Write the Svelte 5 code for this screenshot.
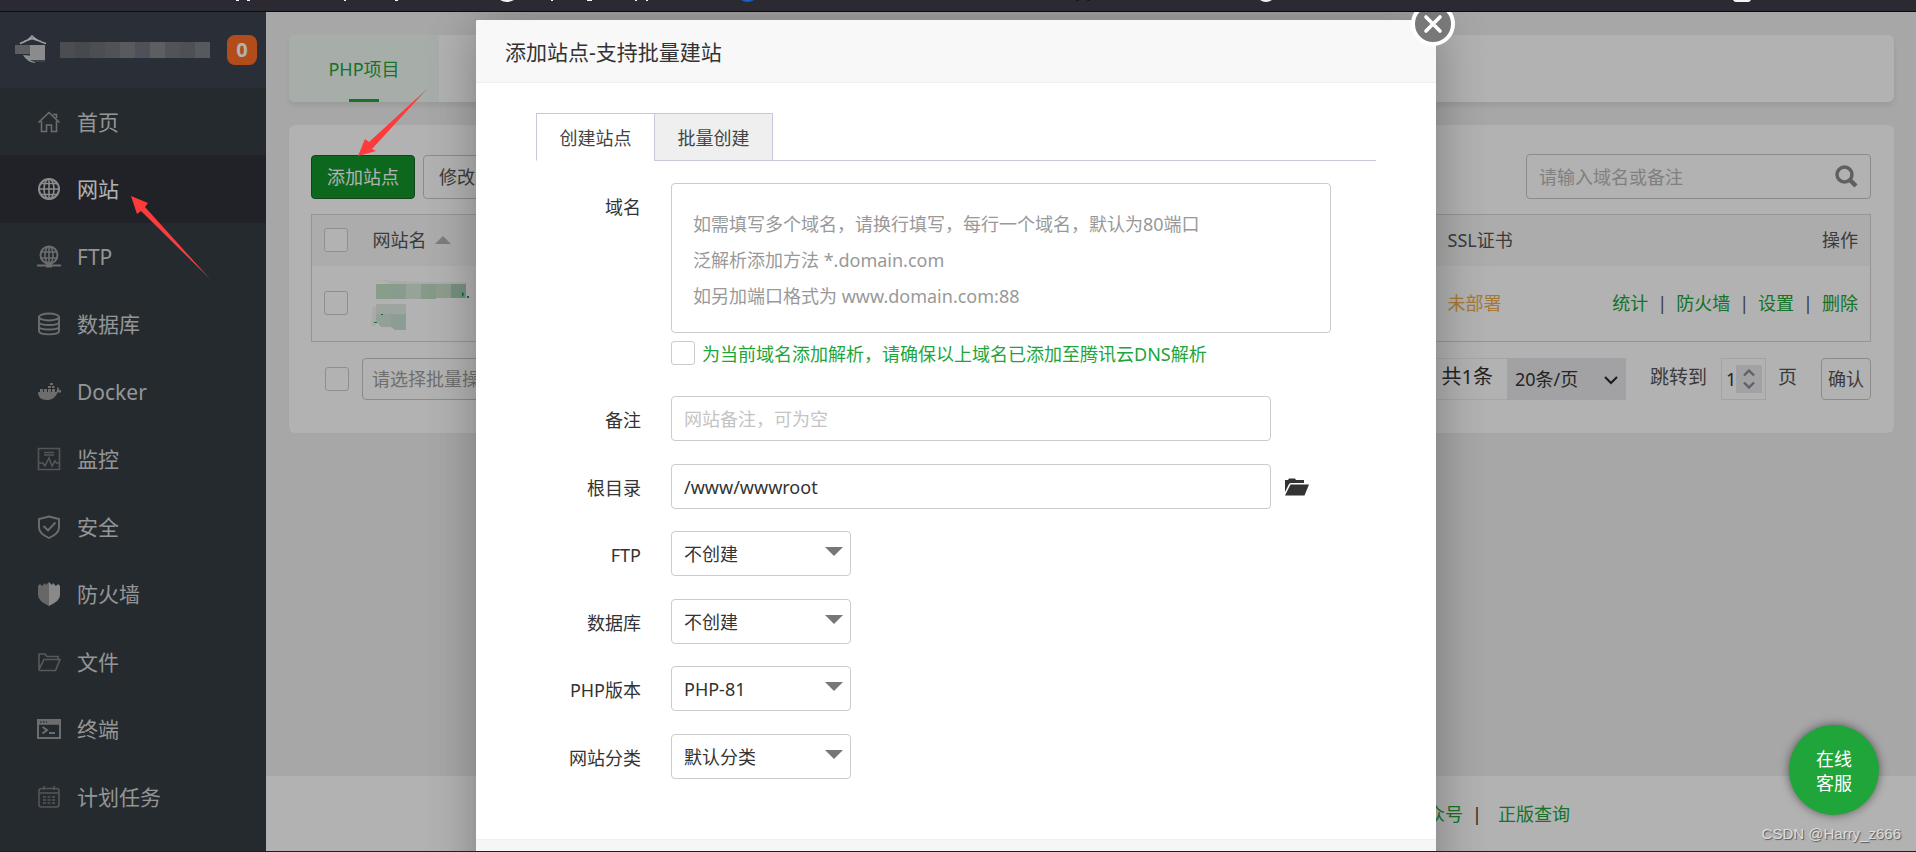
<script>
  const menu = [
    { id: 'home', label: '首页' },
    { id: 'site', label: '网站' },
    { id: 'ftp', label: 'FTP' },
    { id: 'db', label: '数据库' },
    { id: 'docker', label: 'Docker' },
    { id: 'monitor', label: '监控' },
    { id: 'safe', label: '安全' },
    { id: 'wall', label: '防火墙' },
    { id: 'files', label: '文件' },
    { id: 'term', label: '终端' },
    { id: 'cron', label: '计划任务' }
  ];
  const selects = [
    { id: 'f-ftp', label: 'FTP', value: '不创建' },
    { id: 'f-db', label: '数据库', value: '不创建' },
    { id: 'f-php', label: 'PHP版本', value: 'PHP-81' },
    { id: 'f-type', label: '网站分类', value: '默认分类' }
  ];
  const hint = '如需填写多个域名，请换行填写，每行一个域名，默认为80端口\n泛解析添加方法 *.domain.com\n如另加端口格式为 www.domain.com:88';
  const blurred = ['#6c6f73', '#656a6e', '#6c7176', '#73767b', '#808286', '#717482', '#85878c', '#747880', '#71737b', '#7d8185'];
</script>

<div class="page">
  <div class="browser">
    <svg width="1916" height="11" viewBox="0 0 1916 11" aria-hidden="true">
      <g fill="#f4f4f6">
        <path d="M236 0h3v1h-3zM247 0h3v1h-3zM344 0h2v1h-2zM395 0h3v1h-3zM551 0h2v1h-2zM587 0h5v1h-5zM635 0h2v1h-2zM646 0h2v1h-2z" />
        <path d="M500 0h14q-7 4-14 0zM1260 0h12q-6 4-12 0zM1733 0h18q-1 2-3 2h-12q-2 0-3-2z" />
      </g>
      <path d="M741 0h13q-6 4-13 0z" fill="#1c5fc4" />
      <path d="M1076 0h3v1h-3zM1087 0h3v1h-3z" fill="#17161c" />
    </svg>
  </div>

  <div class="app">
    <aside class="side">
      <header class="brand">
        <svg class="logo" width="32" height="30" viewBox="0 0 32 30" aria-hidden="true">
          <path d="M5 8.500Q13 6 17 1q5 5 14 7.500M9 6.500l8-3 9 3" fill="none" stroke="#e8e8e8" stroke-width="1.600" />
          <path d="M8 20l12 1v7q-8-1-12-8z" fill="#ccc" />
          <path d="M0 10h15v9H0z" fill="#85878c" />
          <path d="M15 10h15v15H15z" fill="#c8c8ca" />
          <path d="M15 25h15v2H19z" fill="#5a5e66" />
        </svg>
        <span class="mosaic">
          {#each blurred as c}<i style="background:{c}"></i>{/each}
        </span>
        <span class="badge">0</span>
      </header>
      <nav>
        {#each menu as m}
          <a href="#{m.id}" class:active={m.id === 'site'}>
            <svg width="24" height="24" viewBox="0 0 24 24" fill="none" stroke="currentColor" stroke-width="1.600" aria-hidden="true">
              {#if m.id === 'home'}
                <path d="M1.500 12.500L12 2.500l10.500 10M4.500 11v10.500h5V15h5v6.500h5V11M16 4.500h3.500V8" />
              {:else if m.id === 'site'}
                <circle cx="12" cy="12" r="10" stroke-width="2" /><ellipse cx="12" cy="12" rx="5" ry="10" /><path d="M2 12h20M12 2v20M4 6.500h16M4 17.500h16" />
              {:else if m.id === 'ftp'}
                <circle cx="12" cy="10" r="8.500" stroke-width="2" /><ellipse cx="12" cy="10" rx="4" ry="8.500" /><path d="M4 7h16M4 13h16M12 2v17" /><path d="M0 20.500h24" stroke-width="2" /><path d="M9 18h6v4.500H9z" fill="currentColor" stroke="none" />
              {:else if m.id === 'db'}
                <g stroke-width="1.900"><ellipse cx="12" cy="5" rx="10" ry="3.500" /><path d="M2 5v14c0 4.500 20 4.500 20 0V5M2 10c0 4 20 4 20 0M2 14.500c0 4 20 4 20 0" /></g>
              {:else if m.id === 'docker'}
                <path d="M1 12h18.500l1-5q2 1 1.500 3h2v2.500h-3.500C18 18 15 20 10 20 4 20 1 17 1 12zM3 9h3v3H3zM7 9h3v3H7zM11 9h3v3h-3zM15 9h3v3h-3zM11 6h3v2h-3zM15 6h2.500v2H15zM13 3h3v2h-3z" fill="currentColor" stroke="none" />
              {:else if m.id === 'monitor'}
                <path d="M1.500 1.500h21v21h-21zM2 16h4l2 3 4-8 3 8 3-5 1.500 2H22M7 5.500h10M7 8h10" opacity=".65" />
              {:else if m.id === 'safe'}
                <path d="M12 1.500l10 2.500v8.500q0 6-10 10.500Q2 18.500 2 12.500V4zM6.500 11l4.500 4.500 7.500-8" stroke-width="1.900" />
              {:else if m.id === 'wall'}
                <path d="M12 0v24Q1 19 1 13V4l2-2 2 2 3-3 1 2z" fill="#949494" stroke="none" /><path d="M12 0v24q11-5 11-11V4l-2-2-2 2-3-3-1 2z" fill="#c4c4c4" stroke="none" />
              {:else if m.id === 'files'}
                <path d="M2 19.500V4h6l2 2.500h11v3M2 19.500q0 1 1 1h15.500L23 9.500H7z" opacity=".7" />
              {:else if m.id === 'term'}
                <path d="M1 3h22v18H1z" stroke-width="2" /><path d="M1 3h22v4H1z" fill="currentColor" /><path d="M5.500 10l4.500 3-4.500 3.500M12 16h6" stroke-width="2" /><path d="M3 5h7" stroke="#444b50" stroke-dasharray="1.500 1.500" />
              {:else}
                <g opacity=".65"><rect x="2" y="3.500" width="20" height="18.500" rx="2.500" /><path d="M2 8h20M7 1v4M17 1v4" /><path d="M6 12h12M6 15h12M6 18h12" stroke-dasharray="3 1.500" /></g>
              {/if}
            </svg>
            <span>{m.label}</span>
          </a>
        {/each}
      </nav>
    </aside>

    <main>
      <div class="content">
        <div class="card types">
          <a href="#php" class="on">PHP项目</a>
          <a href="#java">Java项目</a>
        </div>

        <section class="card list">
          <div class="tools">
            <button class="btn primary">添加站点</button>
            <button class="btn">修改默认页</button>
            <div class="search">
              <input type="text" aria-label="搜索" placeholder="请输入域名或备注" />
              <svg width="24" height="24" viewBox="0 0 24 24" fill="none" stroke="#8a8a8a" stroke-width="3.500" aria-hidden="true"><circle cx="10.500" cy="10.500" r="7.500" /><path d="M16 16l6 6" stroke-width="4.500" /></svg>
            </div>
          </div>

          <table>
            <thead>
              <tr>
                <th class="pick"><input type="checkbox" aria-label="全选" /></th>
                <th class="name">网站名<i class="sort"></i></th>
                <th class="ssl">SSL证书</th>
                <th class="end">操作</th>
              </tr>
            </thead>
            <tbody>
              <tr>
                <td class="pick"><input type="checkbox" aria-label="选择站点" /></td>
                <td>
                  <svg class="hidden-name" width="104" height="50" viewBox="0 0 104 50" aria-hidden="true">
                    <path d="M3 0h12v4h78v-2H48zM0 26h3v20H-2z" fill="#f4f5f3" />
                    <path d="M3 4h15v15H3z" fill="#c2e2c6" /><path d="M18 4h15v15H18z" fill="#c3e0cb" /><path d="M33 4h15v15H33z" fill="#d8e8dc" /><path d="M48 4h15v15H48z" fill="#bfdfc4" /><path d="M63 4h15v14H63z" fill="#cce0cc" /><path d="M78 4h15v14H78z" fill="#aacdba" />
                    <path d="M3 24h30v10H3z" fill="#e3ece5" /><path d="M3 34h15v13H8l-5-6z" fill="#d2e6da" /><path d="M18 34h15v16H22l-4-3z" fill="#c9e2d3" />
                    <path d="M93 1h9l2 4-2 6h-9z" fill="#fff" /><path d="M89 12q4 2 0 5M94 16h2v2h-2zM1 42h3v1H1zM8 34h2v1H8z" fill="#12a04a" />
                  </svg>
                </td>
                <td class="warn">未部署</td>
                <td class="end ops">
                  <a href="#stat">统计</a><span>|</span><a href="#waf">防火墙</a><span>|</span><a href="#set">设置</a><span>|</span><a href="#del">删除</a>
                </td>
              </tr>
            </tbody>
          </table>

          <div class="pager">
            <input type="checkbox" aria-label="批量选择" />
            <button class="batch">请选择批量操作</button>
            <span class="total">共1条</span>
            <div class="size">
              <select aria-label="每页条数"><option>20条/页</option></select>
              <svg width="14" height="10" viewBox="0 0 14 10" fill="none" stroke="#2b2b2f" stroke-width="2.200" aria-hidden="true"><path d="M1 2l6 6 6-6" /></svg>
            </div>
            <label class="jump" for="page-no">跳转到</label>
            <div class="num">
              <input id="page-no" type="text" value="1" />
              <span><svg width="12" height="20" viewBox="0 0 12 20" fill="none" stroke="#8b8b93" stroke-width="2.400" aria-hidden="true"><path d="M1 6.500l5-5 5 5M1 13.500l5 5 5-5" /></svg></span>
            </div>
            <span class="unit">页</span>
            <button class="ok">确认</button>
          </div>
        </section>
      </div>

      <footer>
        <a href="#wechat">微信公众号</a><span>|</span><a href="#verify">正版查询</a>
      </footer>
    </main>

    <div class="mask"></div>

    <div class="layer">
      <div class="dialog" role="dialog" aria-labelledby="dlg-title">
        <header><h1 id="dlg-title">添加站点-支持批量建站</h1></header>
        <button class="close" aria-label="关闭">
          <svg width="46" height="46" viewBox="0 0 46 46" aria-hidden="true"><circle cx="23" cy="23" r="20" fill="#787878" stroke="#fff" stroke-width="4" /><path d="M16 16l14 14M30 16L16 30" stroke="#fff" stroke-width="3.600" stroke-linecap="round" /></svg>
        </button>
        <form onsubmit={(e) => e.preventDefault()}>
          <div class="tabs">
            <button type="button" class="cur">创建站点</button>
            <button type="button">批量创建</button>
            <i></i>
          </div>
          <div class="row tall">
            <label for="f-domain">域名</label>
            <div>
              <textarea id="f-domain" placeholder={hint}></textarea>
              <label class="dns"><input type="checkbox" /><span>为当前域名添加解析，请确保以上域名已添加至腾讯云DNS解析</span></label>
            </div>
          </div>
          <div class="row">
            <label for="f-note">备注</label>
            <input class="text" id="f-note" type="text" placeholder="网站备注，可为空" />
          </div>
          <div class="row">
            <label for="f-root">根目录</label>
            <input class="text" id="f-root" type="text" value="/www/wwwroot" />
            <button type="button" class="folder" aria-label="选择目录">
              <svg width="24" height="18" viewBox="0 0 24 18" fill="#333" aria-hidden="true"><path d="M0 14V2h3l1-1.500h6L11 2h8v3H5.500L4 6z" /><path d="M5.500 6.500H24L19.500 17.500H0z" /></svg>
            </button>
          </div>
          {#each selects as s}
            <div class="row">
              <label for={s.id}>{s.label}</label>
              <div class="pickbox"><select id={s.id}><option>{s.value}</option></select></div>
            </div>
          {/each}
        </form>
        <div class="dialog-foot"></div>
      </div>
    </div>

    <button class="support"><span>在线</span><span>客服</span></button>
  </div>

  <svg class="arrows" width="480" height="300" viewBox="0 0 480 300" fill="#fd3b3a" aria-hidden="true">
    <path d="M358 156l7-17 4 3L427 89l-55 60 4 2z" />
    <path d="M131 196l17 7-3 4L210 279l-69-68-4 3z" />
  </svg>
  <div class="watermark">CSDN @Harry_z666</div>
</div>

<style>
  :global(body) { margin: 0; }
  .page, .page :global(*) { box-sizing: border-box; }
  .page {
    position: relative;
    display: flex;
    flex-direction: column;
    height: 100vh;
    overflow: hidden;
    border-bottom: 1px solid #1a1c3a;
    font: 18px/24px "Noto Sans", "Noto Sans CJK SC", sans-serif;
    color: #555;
  }
  button, input, select, textarea { font: inherit; color: inherit; margin: 0; }
  button { cursor: pointer; padding: 0; background: none; border: 0; white-space: nowrap; }
  a { color: #20a53a; text-decoration: none; }
  svg { display: block; flex: none; }
  .browser { flex: none; height: 12px; overflow: hidden; background: #2b2a33; border-bottom: 1px solid #0c0c0d; }
  .app { position: relative; flex: 1; min-height: 0; display: flex; overflow: hidden; background: #f0f0f0; }

  .side { flex: none; width: 266px; background: #363d43; }
  .brand { display: flex; align-items: center; gap: 13px; height: 76px; padding: 0 9px 0 15px; background: #3d4350; }
  .mosaic { display: flex; flex: 1; height: 16px; margin-right: 4px; }
  .mosaic i { flex: 1; }
  .badge { width: 30px; height: 30px; border-radius: 8px; background: #ff6f28; color: #fff; font-weight: 700; font-size: 20px; line-height: 30px; text-align: center; }
  nav { display: grid; grid-auto-rows: 67px 68px; }
  nav a { display: flex; align-items: center; gap: 16px; padding-left: 37px; color: #d4d6d7; font-size: 21px; }
  nav svg { color: #9c9d9e; }
  nav .active { background: #2e3238; color: #fff; }
  nav .active svg { color: #c8c8c8; }

  main { flex: 1; min-width: 0; display: flex; flex-direction: column; }
  .content { flex: 1; padding: 23px 22px 0 23px; }
  .card { background: #fff; border-radius: 6px; }
  .types { display: flex; height: 67px; margin-bottom: 23px; box-shadow: 0 4px 6px rgba(0, 0, 0, .08); }
  .types a { position: relative; min-width: 150px; padding: 22px 36px; color: #333; white-space: nowrap; text-align: center; }
  .types .on { background: #f0f9f2; color: #20a53a; border-radius: 6px 0 0 6px; }
  .types .on::after { content: ""; position: absolute; left: calc(50% - 15px); bottom: 0; width: 30px; height: 3px; background: #20a53a; }
  .list { padding: 29px 23px 33px 22px; box-shadow: 0 0 2px rgba(0, 0, 0, .06); }
  .tools { display: flex; align-items: center; gap: 8px; margin-bottom: 15px; }
  .btn { height: 44px; padding: 0 15px; border: 1px solid #c8c8c8; border-radius: 4px; }
  .primary { background: #10952a; border-color: #1f5f28; color: #fff; }
  .search { position: relative; margin-left: auto; width: 345px; }
  .search input { width: 100%; height: 45px; padding: 0 50px 0 12px; border: 1px solid #c8c8c8; border-radius: 4px; background: #fff; }
  .search input::placeholder { color: #b8b8b8; }
  .search svg { position: absolute; right: 13px; top: 10px; }
  input[type="checkbox"] { appearance: none; flex: none; display: block; width: 24px; height: 24px; border: 1px solid #ccc; border-radius: 3px; background: #fff; }

  table { width: 100%; border-collapse: collapse; table-layout: fixed; border: 1px solid #d6d6d6; text-align: left; }
  th { height: 51px; padding: 0; background: #f6f6f6; font-weight: 400; }
  td { height: 76px; padding: 0; }
  .pick { width: 61px; padding-left: 12px; }
  .ssl { width: 120px; }
  th.end { width: 303px; }
  .sort { display: inline-block; margin-left: 8px; vertical-align: 3px; border: 8px solid transparent; border-top: 0; border-bottom-color: #b4b4b4; }
  .hidden-name { overflow: visible; margin-top: 4px; }
  .warn { color: #f0ad4e; }
  .end { text-align: right; padding-right: 12px; white-space: nowrap; }
  .ops span { margin: 0 9px; }

  .pager { display: flex; align-items: center; margin-top: 16px; padding-left: 14px; }
  .batch { height: 42px; width: 220px; margin-left: 13px; padding: 0 9px; text-align: left; border: 1px solid #c8c8c8; border-radius: 4px; color: #a0a0a0; }
  .total { margin-left: auto; height: 42px; padding: 0 14px; line-height: 36px; font-size: 20px; border: 1px solid #ececec; border-right: 0; color: #333; }
  .size { position: relative; width: 119px; color: #333; }
  .size select { appearance: none; width: 100%; height: 42px; padding: 0 8px; border: 0; border-radius: 0; background: #e9e9ed; }
  .size svg { position: absolute; right: 8px; top: 17px; }
  .jump { margin-left: 24px; padding-bottom: 4px; }
  .jump, .unit { font-size: 19px; }
  .num { display: flex; align-items: center; width: 45px; height: 42px; margin-left: 14px; padding: 0 3px 0 4px; border: 1px solid #e8e8e8; color: #333; }
  .num input { width: 10px; padding: 0; border: 0; background: none; }
  .num span { display: grid; place-items: center; width: 27px; height: 28px; background: #e9e9ed; }
  .unit { margin-left: 12px; padding-bottom: 4px; }
  .ok { width: 50px; height: 42px; margin-left: 24px; border: 1px solid #c8c8c8; border-radius: 4px; }

  footer { flex: none; display: flex; justify-content: flex-end; height: 75px; padding: 26px 346px 0 0; background: #fff; color: #333; }
  footer span { margin: 0 16px 0 9px; }

  .mask { position: absolute; inset: 0; background: rgba(0, 0, 0, .3); }
  .layer { position: absolute; inset: 0; overflow: hidden; }
  .dialog { position: relative; width: 960px; margin: 8px auto 0; left: -2px; background: #fff; border-radius: 2px; box-shadow: 1px 1px 50px rgba(0, 0, 0, .3); color: #333; }
  .dialog > header { padding: 19px 29px 17px; background: #f8f8f8; border-bottom: 1px solid #eee; border-radius: 2px 2px 0 0; }
  h1 { margin: 0; font-size: 21px; line-height: 26px; font-weight: 400; }
  .close { position: absolute; right: -20px; top: -19px; }
  form { padding: 30px 60px 38px; }
  .tabs { display: flex; margin-bottom: 22px; }
  .tabs button { height: 48px; width: 119px; padding-top: 2px; border: 1px solid #c8c8dc; background: #efefef; color: #444; }
  .tabs .cur { width: 118px; background: #fff; border-right: 0; border-bottom-color: transparent; }
  .tabs i { flex: 1; border-bottom: 1px solid #c8c8dc; }
  .row { display: flex; align-items: flex-start; margin-bottom: 22px; }
  .row:nth-child(odd) { margin-bottom: 23px; }
  .row > label { width: 105px; margin-right: 30px; line-height: 48px; height: 45px; text-align: right; }
  .row.tall { margin-bottom: 31px; }
  textarea { display: block; width: 660px; height: 150px; padding: 22px 21px; border: 1px solid #ccc; border-radius: 4px; line-height: 36px; resize: none; overflow: hidden; }
  textarea::placeholder { color: #999; }
  .dns { display: flex; align-items: center; gap: 7px; margin-top: 8px; height: 24px; color: #20a53a; }
  .dns span { padding-top: 2px; }
  .text { width: 600px; height: 45px; padding: 0 12px; border: 1px solid #ccc; border-radius: 4px; }
  .text::placeholder { color: #c4c4c4; }
  .folder { margin: 14px 0 0 14px; }
  .pickbox { position: relative; width: 180px; }
  .pickbox select { appearance: none; width: 100%; height: 45px; padding: 0 12px; border: 1px solid #ccc; border-radius: 4px; background: #fff; }
  .pickbox::after { content: ""; position: absolute; right: 8px; top: 16px; border: 9px solid transparent; border-bottom: 0; border-top-color: #777; pointer-events: none; }
  .dialog-foot { height: 70px; background: #f5f7f7; border-top: 1px solid #edf1f2; }

  .support { position: absolute; right: 37px; bottom: 36px; display: grid; align-content: center; width: 90px; height: 90px; padding-top: 2px; border-radius: 50%; background: #20a53a; color: #fff; box-shadow: 0 0 10px rgba(0, 0, 0, .5); }
  .arrows { position: absolute; left: 0; top: 0; pointer-events: none; }
  .watermark { position: absolute; right: 15px; bottom: 5px; font: 15px/24px "Liberation Sans", Arial, sans-serif; color: #dedede; text-shadow: 1px 1px 1px #555; }
</style>
